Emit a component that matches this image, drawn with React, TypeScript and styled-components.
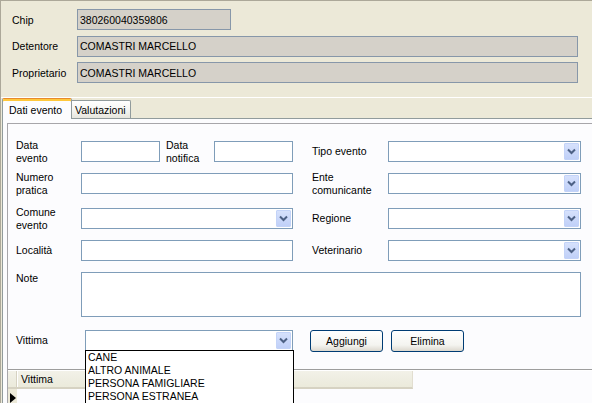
import * as React from "react";
import styled, { createGlobalStyle, css } from "styled-components";

const GlobalStyle = createGlobalStyle`
  html, body {
    margin: 0;
    padding: 0;
    overflow: hidden;
    background: #ECE9D8;
  }
  body {
    font-family: "Liberation Sans", Arial, sans-serif;
    font-size: 10.5px;
    color: #000000;
  }
  * {
    box-sizing: border-box;
  }
`;

const SWindow = styled.div`
  width: 592px;
  height: 403px;
  overflow: hidden;
  background: #ECE9D8;
  border-top: 1px solid #ACA899;
  border-left: 1px solid #ACA899;
  display: flex;
  flex-direction: column;
`;

/* ---------- top panel ---------- */

const SHeader = styled.div`
  height: 97px;
  flex-shrink: 0;
  padding: 8px 0 0 11px;
  border-bottom: 1px solid #FFFFFF;
  display: flex;
  flex-direction: column;
  gap: 5.5px;
`;

const SHeaderRow = styled.div`
  display: flex;
  align-items: center;
  height: 21px;
`;

const SHeaderLabel = styled.div`
  width: 65px;
  flex-shrink: 0;
`;

const SReadOnlyBox = styled.div<{ $width: number }>`
  width: ${p => p.$width}px;
  height: 21px;
  background: #D5D1C9;
  border: 1px solid #8797A9;
  padding-left: 2px;
  display: flex;
  align-items: center;
  white-space: nowrap;
`;

/* ---------- tabs ---------- */

const STabStrip = styled.div`
  height: 20px;
  flex-shrink: 0;
  padding-left: 1px;
  display: flex;
  align-items: flex-end;
`;

const STab = styled.div<{ $active?: boolean }>`
  display: flex;
  align-items: center;
  border: 1px solid #919B9C;
  border-bottom: none;
  white-space: nowrap;

  ${p =>
    p.$active
      ? css`
          position: relative;
          z-index: 1;
          width: 70px;
          height: 21px;
          margin-bottom: -1px;
          padding: 1px 0 0 6px;
          background: #FCFCFE;
          border-top: 1px solid #E68B2C;
          box-shadow: inset 0 2px 0 #FFC83C;
          border-radius: 2px 2px 0 0;
        `
      : css`
          width: 59px;
          height: 18px;
          padding-left: 3px;
          background: linear-gradient(#FFFFFF, #F3F3EF 60%, #E6E5DD);
          border-left: none;
          border-radius: 0 2px 0 0;
        `}
`;

const STabPage = styled.div`
  flex: 1;
  margin-left: 1px;
  background: #FCFCFE;
  border-top: 1px solid #919B9C;
  border-left: 1px solid #919B9C;
  padding: 4px 0 0 4px;
  display: flex;
  flex-direction: column;
`;

const SInnerPanel = styled.div`
  flex: 1;
  border-top: 1px solid #A7A6AA;
  border-left: 1px solid #A7A6AA;
  display: flex;
  flex-direction: column;
`;

/* ---------- form ---------- */

const SForm = styled.div`
  padding: 17px 0 18px 8px;
  border-bottom: 1px solid #9D9D9D;
  box-shadow: 0 1px 0 #FFFFFF;
  display: flex;
  flex-direction: column;
`;

const SFormRow = styled.div<{ $top: number; $height?: number; $topAlign?: boolean }>`
  display: flex;
  align-items: ${p => (p.$topAlign ? "flex-start" : "center")};
  height: ${p => p.$height ?? 21}px;
  margin-top: ${p => p.$top}px;
`;

const SLabel = styled.div<{ $width: number; $gap?: number }>`
  width: ${p => p.$width}px;
  margin-left: ${p => p.$gap ?? 0}px;
  flex-shrink: 0;
  line-height: 13px;
  white-space: nowrap;
`;

const STextBox = styled.div<{ $width: number; $height?: number }>`
  width: ${p => p.$width}px;
  height: ${p => p.$height ?? 21}px;
  flex-shrink: 0;
  background: #FFFFFF;
  border: 1px solid #7F9DB9;
`;

const SCombo = styled.div<{ $width: number }>`
  position: relative;
  width: ${p => p.$width}px;
  height: 21px;
  flex-shrink: 0;
  background: #FFFFFF;
  border: 1px solid #7F9DB9;
  display: flex;
  align-items: center;
  justify-content: flex-end;
  padding-right: 1px;
`;

const SComboButton = styled.div`
  width: 15px;
  height: 17px;
  border: 1px solid #C3D3F8;
  border-radius: 1px;
  background: linear-gradient(#D6E1FC, #C0D0F8);
  display: flex;
  align-items: center;
  justify-content: center;
`;

const SDropList = styled.div`
  position: absolute;
  top: 19px;
  left: -1px;
  width: 209px;
  z-index: 10;
  background: #FFFFFF;
  border: 1px solid #000000;
  padding: 0 0 4px 2px;
`;

const SDropItem = styled.div`
  line-height: 13px;
  height: 13px;
  white-space: nowrap;
`;

const SButton = styled.div<{ $gap: number }>`
  width: 73px;
  height: 22px;
  margin-left: ${p => p.$gap}px;
  flex-shrink: 0;
  border: 1px solid #003C74;
  border-radius: 3px;
  background: linear-gradient(#FFFFFF, #F4F4F0 70%, #DCD8CE);
  display: flex;
  align-items: center;
  justify-content: center;
`;

/* ---------- grid ---------- */

const SGridArea = styled.div`
  flex: 1;
  padding-top: 1px;
`;

const SGrid = styled.div`
  width: 405px;
  display: flex;
  flex-direction: column;
`;

const SGridHeader = styled.div`
  display: flex;
  height: 18px;
  background: linear-gradient(#F2F1E8, #EBEADB);
  border-bottom: 2px solid #D6D2C2;
  border-right: 1px solid #E2DED0;
`;

const SRowHeader = styled.div`
  width: 9px;
  flex-shrink: 0;
  border-right: 1px solid #D6D2C2;
`;

const SHeaderCell = styled.div`
  flex: 1;
  padding-left: 3px;
  display: flex;
  align-items: center;
  border-left: 1px solid #FFFFFF;
`;

const SGridRow = styled.div`
  display: flex;
  height: 15px;
`;

const SRowSelector = styled.div`
  width: 9px;
  flex-shrink: 0;
  background: #ECE9D8;
  display: flex;
  align-items: center;
  justify-content: center;
  padding-top: 3px;
`;

const Chevron = () => (
  <svg width="9" height="7" viewBox="0 0 9 7">
    <path d="M1 1.5 L4.5 5 L8 1.5" fill="none" stroke="#4D6185" strokeWidth="2" />
  </svg>
);

interface IComboProps {
  width: number;
  children?: React.ReactNode;
}

const Combo = ({ width, children }: IComboProps) => (
  <SCombo $width={width}>
    <SComboButton>
      <Chevron />
    </SComboButton>
    {children}
  </SCombo>
);

const vittime = ["CANE", "ALTRO ANIMALE", "PERSONA FAMIGLIARE", "PERSONA ESTRANEA"];

const App = () => (
  <>
    <GlobalStyle />
    <SWindow>
      <SHeader>
        <SHeaderRow>
          <SHeaderLabel>Chip</SHeaderLabel>
          <SReadOnlyBox $width={154}>380260040359806</SReadOnlyBox>
        </SHeaderRow>
        <SHeaderRow>
          <SHeaderLabel>Detentore</SHeaderLabel>
          <SReadOnlyBox $width={501}>COMASTRI MARCELLO</SReadOnlyBox>
        </SHeaderRow>
        <SHeaderRow>
          <SHeaderLabel>Proprietario</SHeaderLabel>
          <SReadOnlyBox $width={501}>COMASTRI MARCELLO</SReadOnlyBox>
        </SHeaderRow>
      </SHeader>

      <STabStrip>
        <STab $active>Dati evento</STab>
        <STab>Valutazioni</STab>
      </STabStrip>

      <STabPage>
        <SInnerPanel>
          <SForm>
            <SFormRow $top={0}>
              <SLabel $width={65}>Data<br />evento</SLabel>
              <STextBox $width={79} />
              <SLabel $width={48} $gap={6}>Data<br />notifica</SLabel>
              <STextBox $width={79} />
              <SLabel $width={76} $gap={19}>Tipo evento</SLabel>
              <Combo width={193} />
            </SFormRow>
            <SFormRow $top={11}>
              <SLabel $width={65}>Numero<br />pratica</SLabel>
              <STextBox $width={212} />
              <SLabel $width={76} $gap={19}>Ente<br />comunicante</SLabel>
              <Combo width={193} />
            </SFormRow>
            <SFormRow $top={14}>
              <SLabel $width={65}>Comune<br />evento</SLabel>
              <Combo width={212} />
              <SLabel $width={76} $gap={19}>Regione</SLabel>
              <Combo width={193} />
            </SFormRow>
            <SFormRow $top={11}>
              <SLabel $width={65}>Località</SLabel>
              <STextBox $width={212} />
              <SLabel $width={76} $gap={19}>Veterinario</SLabel>
              <Combo width={193} />
            </SFormRow>
            <SFormRow $top={11} $height={45} $topAlign>
              <SLabel $width={65}>Note</SLabel>
              <STextBox $width={500} $height={45} />
            </SFormRow>
            <SFormRow $top={13}>
              <SLabel $width={69}>Vittima</SLabel>
              <Combo width={208}>
                <SDropList>
                  {vittime.map(v => (
                    <SDropItem key={v}>{v}</SDropItem>
                  ))}
                </SDropList>
              </Combo>
              <SButton $gap={17}>Aggiungi</SButton>
              <SButton $gap={8}>Elimina</SButton>
            </SFormRow>
          </SForm>

          <SGridArea>
            <SGrid>
              <SGridHeader>
                <SRowHeader />
                <SHeaderCell>Vittima</SHeaderCell>
              </SGridHeader>
              <SGridRow>
                <SRowSelector>
                  <svg width="6" height="10" viewBox="0 0 6 10">
                    <polygon points="0,0 6,5 0,10" fill="#000000" />
                  </svg>
                </SRowSelector>
              </SGridRow>
            </SGrid>
          </SGridArea>
        </SInnerPanel>
      </STabPage>
    </SWindow>
  </>
);

export default App;
